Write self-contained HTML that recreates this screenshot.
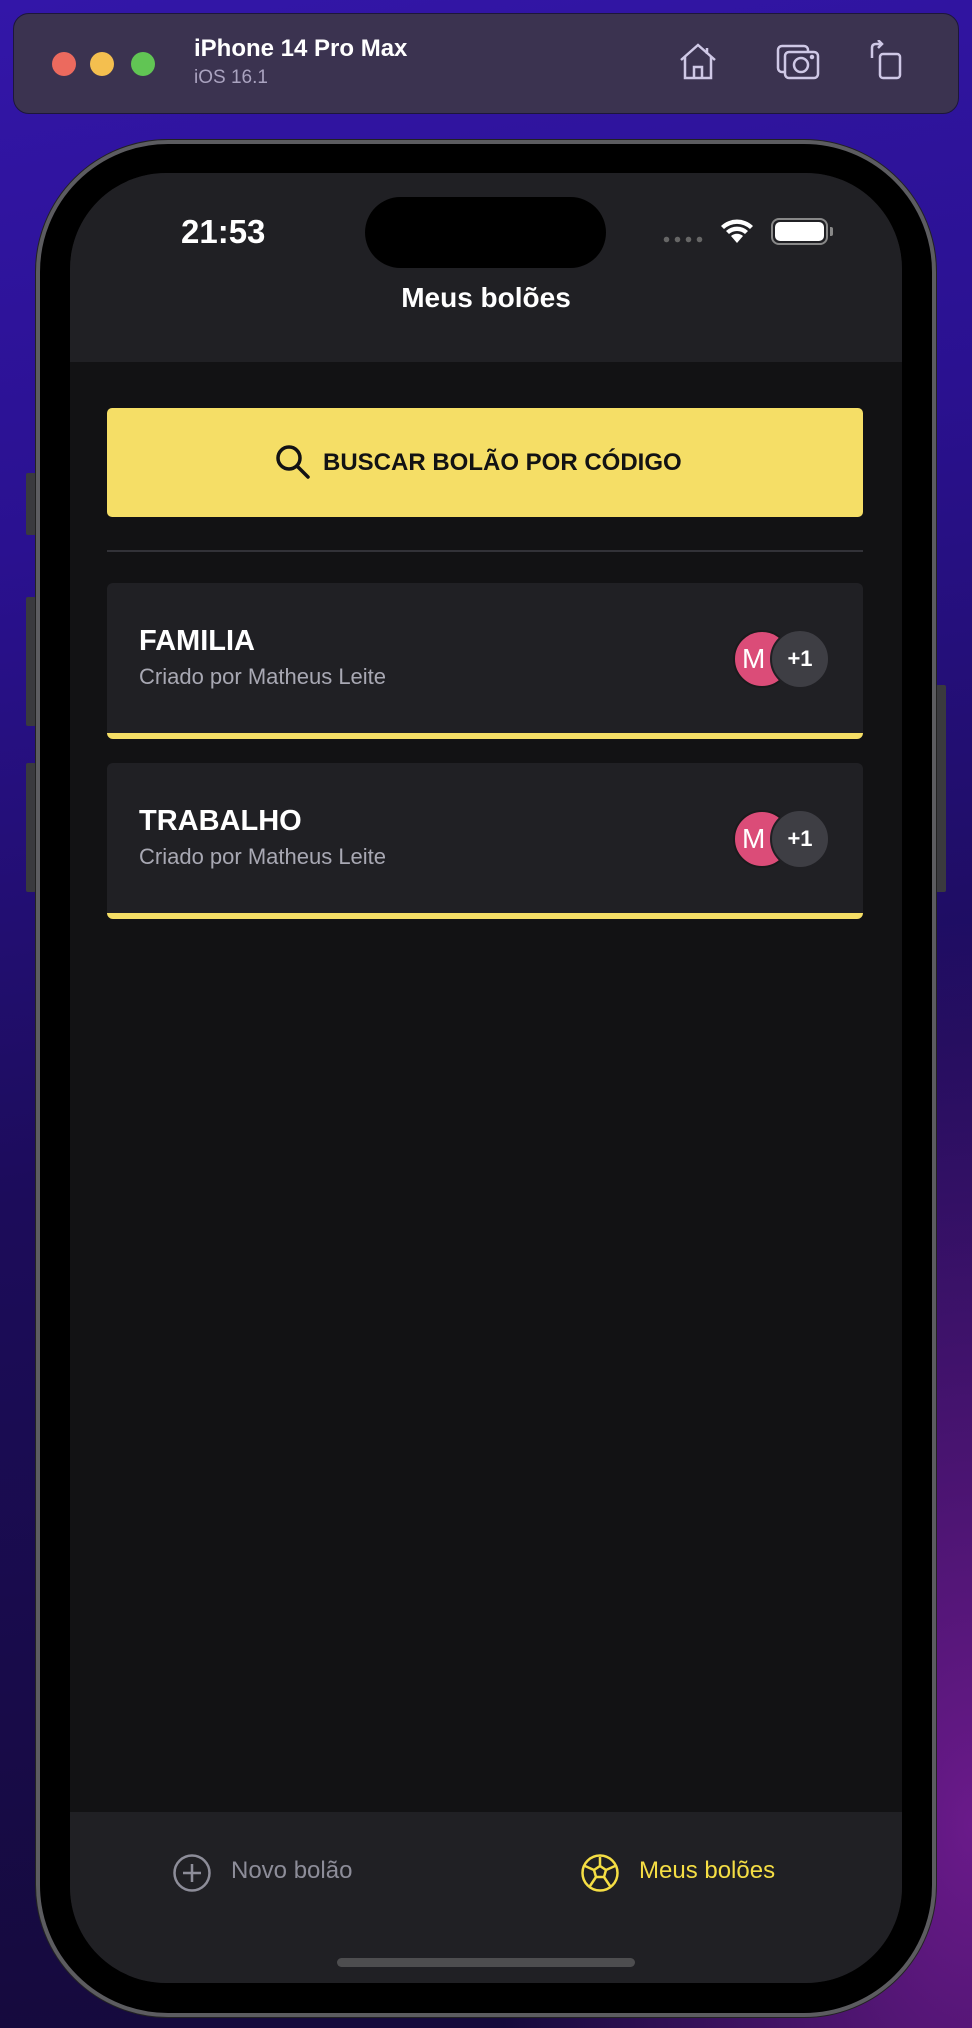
<!DOCTYPE html>
<html><head><meta charset="utf-8"><style>
*{margin:0;padding:0;box-sizing:border-box}
body{width:972px;height:2028px;overflow:hidden;position:relative;font-family:"Liberation Sans",sans-serif;
background:radial-gradient(ellipse at 100% 90%,#6a1a8a 0%,rgba(106,26,138,0) 35%),linear-gradient(170deg,#3316a8 0%,#2a1190 25%,#1c0c5a 55%,#140a38 100%);}
.abs{position:absolute}
.bar{left:13px;top:13px;width:946px;height:101px;border-radius:16px;background:#3b3350;border:1px solid #1d173a}
.dot{width:24px;height:24px;border-radius:50%;top:52px}
.btn{background:#3a3a3e;width:10px;border-radius:2px}
</style></head><body>
<div class="abs bar"></div>
<div class="abs dot" style="left:52px;background:#ec6a5e"></div>
<div class="abs dot" style="left:90px;background:#f4bf4f"></div>
<div class="abs dot" style="left:131px;background:#61c554"></div>
<div class="abs" style="left:194px;top:35px;color:#fff;font-weight:bold;font-size:24px">iPhone 14 Pro Max</div>
<div class="abs" style="left:194px;top:67px;color:#aaa3c0;font-size:19px">iOS 16.1</div>
<svg class="abs" style="left:677px;top:42px" width="42" height="38" viewBox="0 0 42 38" fill="none" stroke="#cfc8e6" stroke-width="2.5"><path d="M4 18 L21 3 L38 18 M8 15 V36 H34 V15 M17 36 V25 H25 V36"/><path d="M30 6 V12"/></svg>
<svg class="abs" style="left:776px;top:44px" width="44" height="36" viewBox="0 0 44 36" fill="none" stroke="#cfc8e6" stroke-width="2.5"><rect x="2" y="2" width="30" height="26" rx="4"/><rect x="9" y="8" width="33" height="26" rx="4" fill="#3b3350"/><circle cx="25" cy="21" r="7"/><circle cx="36" cy="13" r="1" fill="#cfc8e6"/></svg>
<svg class="abs" style="left:868px;top:40px" width="36" height="40" viewBox="0 0 36 40" fill="none" stroke="#cfc8e6" stroke-width="2.5"><rect x="12" y="14" width="20" height="24" rx="3"/><path d="M4 18 V8 Q4 4 8 4 H14 M10 0 L14 4 L10 8"/></svg>

<div class="abs btn" style="left:26px;top:473px;height:62px"></div>
<div class="abs btn" style="left:26px;top:597px;height:129px"></div>
<div class="abs btn" style="left:26px;top:763px;height:129px"></div>
<div class="abs btn" style="left:936px;top:685px;height:207px"></div>

<div class="abs" style="left:36px;top:140px;width:900px;height:1877px;border-radius:132px;background:#000;border:4px solid #5c5c60;box-shadow:0 0 0 1px #222"></div>
<div class="abs" style="left:70px;top:173px;width:832px;height:1810px;border-radius:96px;background:#121214;overflow:hidden">
  <div class="abs" style="left:0;top:0;width:832px;height:189px;background:#202024"></div>
  <div class="abs" style="left:111px;top:40px;color:#fff;font-weight:bold;font-size:33px">21:53</div>
  <div class="abs" style="left:295px;top:24px;width:241px;height:71px;border-radius:36px;background:#000"></div>
  <div class="abs" style="left:591px;top:63px;width:44px;height:7px;background:radial-gradient(circle,#666 2.5px,transparent 3px) 0 0/11px 7px"></div>
  <svg class="abs" style="left:648px;top:44px" width="38" height="28" viewBox="0 0 38 28"><path d="M19 26 L13 19 A9 9 0 0 1 25 19 Z M8 14 A16 16 0 0 1 30 14 L27 17 A12 12 0 0 0 11 17 Z M3 9 A23 23 0 0 1 35 9 L32 12 A19 19 0 0 0 6 12 Z" fill="#fff"/></svg>
  <div class="abs" style="left:701px;top:45px;width:57px;height:27px;border-radius:8px;border:2.5px solid #888"></div>
  <div class="abs" style="left:705px;top:49px;width:49px;height:19px;border-radius:5px;background:#fff"></div>
  <div class="abs" style="left:760px;top:54px;width:3px;height:9px;border-radius:0 2px 2px 0;background:#888"></div>
  <div class="abs" style="left:0;top:109px;width:832px;text-align:center;color:#fff;font-weight:bold;font-size:28px">Meus bolões</div>

  <div class="abs" style="left:37px;top:235px;width:756px;height:109px;background:#f5de66;border-radius:5px"></div>
  <svg class="abs" style="left:205px;top:271px" width="36" height="36" viewBox="0 0 36 36" fill="none" stroke="#121214" stroke-width="3.5"><circle cx="14" cy="14" r="11"/><path d="M22 22 L33 33" stroke-linecap="round"/></svg>
  <div class="abs" style="left:253px;top:276px;color:#121214;font-weight:bold;font-size:24px">BUSCAR BOLÃO POR CÓDIGO</div>
  <div class="abs" style="left:37px;top:377px;width:756px;height:2px;background:#323238"></div>

  <div class="abs" style="left:37px;top:410px;width:756px;height:156px;background:#202024;border-radius:6px;border-bottom:6px solid #f5de66"></div>
  <div class="abs" style="left:69px;top:452px;color:#fff;font-weight:bold;font-size:29px">FAMILIA</div>
  <div class="abs" style="left:69px;top:491px;color:#a8a8b3;font-size:22px">Criado por Matheus Leite</div>
  <div class="abs" style="left:663px;top:457px;width:58px;height:58px;border-radius:50%;background:#db4c78;border:2px solid #1a1a1c;color:#fff;font-size:28px;line-height:54px;padding-left:7px">M</div>
  <div class="abs" style="left:700px;top:456px;width:60px;height:60px;border-radius:50%;background:#3e3e44;border:2px solid #202024;color:#fff;font-size:22px;font-weight:bold;line-height:56px;text-align:center">+1</div>

  <div class="abs" style="left:37px;top:590px;width:756px;height:156px;background:#202024;border-radius:6px;border-bottom:6px solid #f5de66"></div>
  <div class="abs" style="left:69px;top:632px;color:#fff;font-weight:bold;font-size:29px">TRABALHO</div>
  <div class="abs" style="left:69px;top:671px;color:#a8a8b3;font-size:22px">Criado por Matheus Leite</div>
  <div class="abs" style="left:663px;top:637px;width:58px;height:58px;border-radius:50%;background:#db4c78;border:2px solid #1a1a1c;color:#fff;font-size:28px;line-height:54px;padding-left:7px">M</div>
  <div class="abs" style="left:700px;top:636px;width:60px;height:60px;border-radius:50%;background:#3e3e44;border:2px solid #202024;color:#fff;font-size:22px;font-weight:bold;line-height:56px;text-align:center">+1</div>

  <div class="abs" style="left:0;top:1639px;width:832px;height:171px;background:#202024"></div>
  <svg class="abs" style="left:102px;top:1680px" width="40" height="40" viewBox="0 0 40 40" fill="none" stroke="#8d8d99" stroke-width="2.5"><circle cx="20" cy="20" r="17.5"/><path d="M20 11 V29 M11 20 H29"/></svg>
  <div class="abs" style="left:161px;top:1684px;color:#8d8d99;font-size:24px">Novo bolão</div>
  <svg class="abs" style="left:510px;top:1680px" width="40" height="40" viewBox="0 0 40 40" fill="none" stroke="#f5de44" stroke-width="2.5"><circle cx="20" cy="20" r="17.5"/><path d="M14 17 L20 13 L26 17 L24 24 L16 24 Z M20 13 V4 M26 17 L35 13 M24 24 L30 33 M16 24 L10 33 M14 17 L5 13"/></svg>
  <div class="abs" style="left:569px;top:1684px;color:#f5de44;font-size:24px">Meus bolões</div>
  <div class="abs" style="left:267px;top:1785px;width:298px;height:9px;border-radius:5px;background:#4d4d4f"></div>
</div>
</body></html>
